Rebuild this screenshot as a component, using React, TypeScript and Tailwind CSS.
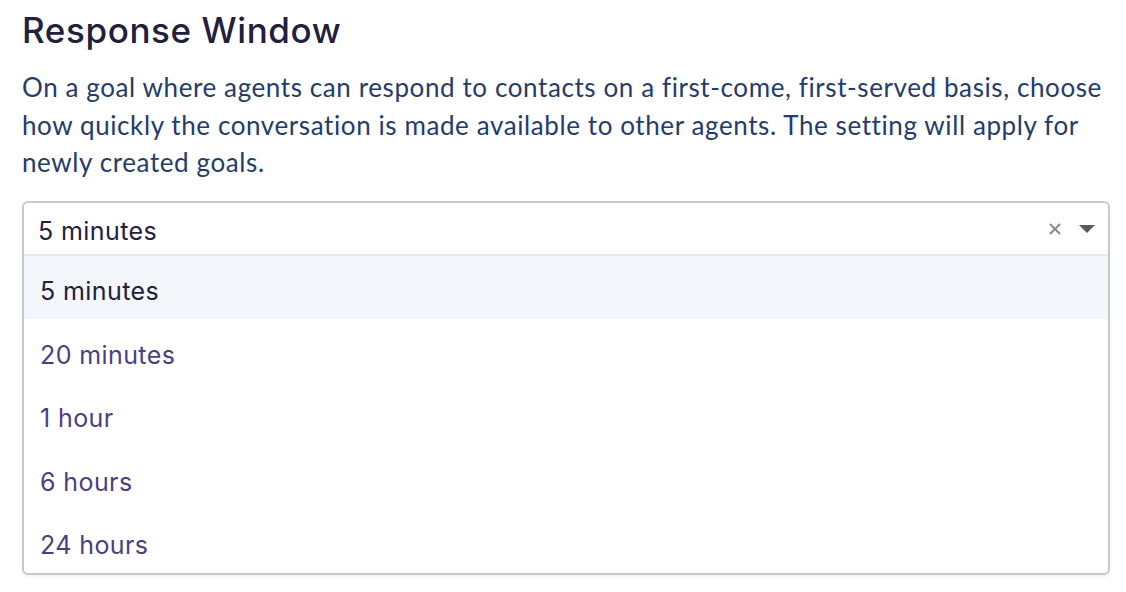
import React from 'react'

const options = ['5 minutes', '20 minutes', '1 hour', '6 hours', '24 hours']

const App = () => {
  return (
    <div className="min-h-screen bg-white pl-[22px] pt-[8px]">
      {/* Title */}
      <h1 className="text-[35px] leading-[44px] font-medium text-[#23203d] tracking-[0.6px] font-['Inter',sans-serif]">
        Response Window
      </h1>

      {/* Description */}
      <p className="mt-[17px] w-[1092px] text-[26px] leading-[37.5px] tracking-[0.6px] text-[#243c6b] font-['Lato',sans-serif]">
        On a goal where agents can respond to contacts on a first-come, first-served basis, choose how quickly the
        conversation is made available to other agents. The setting will apply for newly created goals.
      </p>

      {/* Select with open menu */}
      <div className="mt-[19px] w-[1088px] rounded-[6px] border-2 border-[#c9c9c9] bg-white shadow-[0_2px_3px_rgba(0,0,0,0.06)] font-['Inter',sans-serif]">
        <div className="h-[53px] flex items-center justify-between pl-[14px] pr-[12px] pt-[7px] border-b-2 border-[#e8e8e8]">
          <span className="text-[25px] tracking-[0.4px] text-[#23203d]">5 minutes</span>
          <div className="flex items-center gap-[16px] -mt-[5px]">
            <svg width="14" height="14" viewBox="0 0 14 14">
              <path d="M2 2 L12 12 M12 2 L2 12" stroke="#8a8a8a" strokeWidth="2" />
            </svg>
            <svg width="18" height="10" viewBox="0 0 18 10">
              <path d="M1 1 H17 L9 9 Z" fill="#5a5a5a" />
            </svg>
          </div>
        </div>
        <ul>
          {options.map((o, i) => (
            <li
              key={o}
              className={`h-[63.5px] flex items-center pl-[16px] pt-[9px] text-[25px] tracking-[0.4px] ${
                i === 0 ? 'bg-[#f3f7fb] text-[#23203d]' : 'text-[#4b3f82]'
              }`}
            >
              {o}
            </li>
          ))}
        </ul>
      </div>
    </div>
  )
}

export default App
